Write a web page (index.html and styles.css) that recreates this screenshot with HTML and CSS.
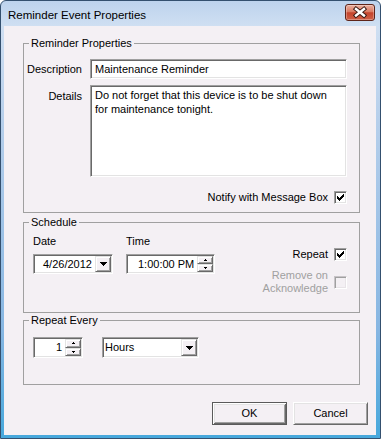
FILE: index.html
```html
<!DOCTYPE html>
<html>
<head>
<meta charset="utf-8">
<title>Reminder Event Properties</title>
<link rel="stylesheet" href="styles.css">
</head>
<body>
<div class="window">
  <div class="titlebar">
    <span class="title">Reminder Event Properties</span>
    <span class="close-btn">
      <svg width="28" height="15" viewBox="0 0 28 15">
        <path d="M10 4 L18 10.5 M18 4 L10 10.5" stroke="#3b1a14" stroke-width="4.4" stroke-linecap="square" fill="none"/>
        <path d="M10 4 L18 10.5 M18 4 L10 10.5" stroke="#ffffff" stroke-width="2.4" stroke-linecap="square" fill="none"/>
      </svg>
    </span>
  </div>
  <div class="client">
    <fieldset class="group group-props">
      <legend>Reminder Properties</legend>
      <div class="props-grid">
        <span class="field-label">Description</span>
        <div class="textbox">Maintenance Reminder</div>
        <span class="field-label field-label-top">Details</span>
        <div class="textbox textarea">Do not forget that this device is to be shut down<br>for maintenance tonight.</div>
      </div>
      <div class="check-row notify-row">
        <span class="check-text">Notify with Message Box</span>
        <span class="checkbox"><svg width="7" height="7" viewBox="0 0 7 7"><path d="M6 0h1v1h-1z M5 1h2v1h-2z M0 2h1v1H0z M4 2h3v1H4z M0 3h2v1H0z M3 3h3v1H3z M0 4h5v1H0z M1 5h3v1H1z M2 6h1v1H2z" fill="#000"/></svg></span>
      </div>
    </fieldset>

    <fieldset class="group group-schedule">
      <legend>Schedule</legend>
      <div class="schedule-body">
        <div class="picker-col date-col">
          <span class="col-label">Date</span>
          <div class="picker date-picker">
            <span class="picker-text">4/26/2012</span>
            <span class="drop-btn"><svg width="7" height="4" viewBox="0 0 7 4"><path d="M0 0h7v1H0z M1 1h5v1H1z M2 2h3v1H2z M3 3h1v1H3z" fill="#000"/></svg></span>
          </div>
        </div>
        <div class="picker-col time-col">
          <span class="col-label">Time</span>
          <div class="picker time-picker">
            <span class="picker-text">1:00:00 PM</span>
            <span class="spin">
              <span class="spin-half"><svg width="3" height="2" viewBox="0 0 3 2"><path d="M1 0h1v1H1z M0 1h3v1H0z" fill="#000"/></svg></span>
              <span class="spin-half"><svg width="3" height="2" viewBox="0 0 3 2"><path d="M0 0h3v1H0z M1 1h1v1H1z" fill="#000"/></svg></span>
            </span>
          </div>
        </div>
        <div class="schedule-checks">
          <div class="check-row">
            <span class="check-text">Repeat</span>
            <span class="checkbox"><svg width="7" height="7" viewBox="0 0 7 7"><path d="M6 0h1v1h-1z M5 1h2v1h-2z M0 2h1v1H0z M4 2h3v1H4z M0 3h2v1H0z M3 3h3v1H3z M0 4h5v1H0z M1 5h3v1H1z M2 6h1v1H2z" fill="#000"/></svg></span>
          </div>
          <div class="check-row disabled-row">
            <span class="check-text">Remove on<br>Acknowledge</span>
            <span class="checkbox checkbox-disabled"></span>
          </div>
        </div>
      </div>
    </fieldset>

    <fieldset class="group group-repeat">
      <legend>Repeat Every</legend>
      <div class="repeat-body">
        <div class="picker num-spinner">
          <span class="picker-text">1</span>
          <span class="spin">
            <span class="spin-half"><svg width="3" height="2" viewBox="0 0 3 2"><path d="M1 0h1v1H1z M0 1h3v1H0z" fill="#000"/></svg></span>
            <span class="spin-half"><svg width="3" height="2" viewBox="0 0 3 2"><path d="M0 0h3v1H0z M1 1h1v1H1z" fill="#000"/></svg></span>
          </span>
        </div>
        <div class="picker combo">
          <span class="picker-text">Hours</span>
          <span class="drop-btn"><svg width="7" height="4" viewBox="0 0 7 4"><path d="M0 0h7v1H0z M1 1h5v1H1z M2 2h3v1H2z M3 3h1v1H3z" fill="#000"/></svg></span>
        </div>
      </div>
    </fieldset>

    <div class="button-row">
      <button class="btn btn-default">OK</button>
      <button class="btn">Cancel</button>
    </div>
  </div>
</div>
</body>
</html>
```

FILE: styles.css
```css
* { box-sizing: border-box; }

body {
  margin: 0;
  font-family: "Liberation Sans", Arial, sans-serif;
  font-size: 11px;
  line-height: 13px;
  color: #000;
  background: #ffffff;
}

.window {
  width: 381px;
  height: 439px;
  border: 1px solid #34506f;
  border-radius: 6px 6px 0 0;
  background: linear-gradient(to bottom, #bdd3ed 0px, #cfdff2 25px, #b6cfeb 120px, #86b6e2 330px, #46a8dc 100%);
  display: flex;
  flex-direction: column;
  overflow: hidden;
}

.titlebar {
  height: 25px;
  flex-shrink: 0;
  display: flex;
  align-items: flex-start;
}

.title {
  font-size: 11.5px;
  line-height: 15px;
  padding: 7px 0 0 7px;
  color: #000;
}

.close-btn {
  margin: 3px 5px 0 auto;
  width: 30px;
  height: 17px;
  border: 1px solid #5e2419;
  border-radius: 3px;
  background: linear-gradient(to bottom, #eab0a0 0%, #da7a62 45%, #c4432b 52%, #cf6047 100%);
  box-shadow: inset 0 0 0 1px rgba(255, 255, 255, 0.3);
  display: flex;
}

.client {
  flex: 1;
  margin: 0 4px 3px 3px;
  background: #f4f0f4;
  padding: 11px 0 0 19px;
  display: flex;
  flex-direction: column;
  align-items: flex-start;
}

.group {
  margin: 0;
  padding: 0;
  border: 1px solid #a0a0a0;
  width: 337px;
  min-width: 0;
}

.group legend {
  margin-left: 5px;
  padding: 0 2px;
  line-height: 13px;
}

.group-props { height: 176px; }
.group-schedule { height: 97px; margin-top: 3px; }
.group-repeat { height: 71px; margin-top: 1px; }

.props-grid {
  display: grid;
  grid-template-columns: 58px 257px;
  column-gap: 8px;
  row-gap: 6px;
  padding-top: 9px;
}

.field-label {
  text-align: right;
  align-self: center;
}

.field-label-top {
  align-self: start;
  margin-top: 5px;
}

.textbox {
  background: #fff;
  border: 1px solid;
  border-color: #a0a0a0 #ffffff #ffffff #a0a0a0;
  box-shadow: inset 1px 1px 0 #696969, inset -1px -1px 0 #e3e3e3;
  height: 20px;
  padding: 0 4px;
  display: flex;
  align-items: center;
  white-space: nowrap;
}

.textarea {
  display: block;
  height: 92px;
  padding: 2px 4px;
  line-height: 14px;
}

.check-row {
  display: flex;
  justify-content: flex-end;
  align-items: center;
}

.notify-row {
  margin-top: 14px;
  padding-right: 12px;
}

.check-text {
  text-align: right;
}

.checkbox {
  width: 13px;
  height: 13px;
  flex-shrink: 0;
  margin-left: 6px;
  background: #fff;
  border: 1px solid;
  border-color: #a0a0a0 #ffffff #ffffff #a0a0a0;
  box-shadow: inset 1px 1px 0 #696969, inset -1px -1px 0 #e3e3e3;
  display: flex;
  align-items: center;
  justify-content: center;
}

.checkbox svg { display: block; }

.checkbox-disabled {
  background: #f4f0f4;
  border-color: #c8c4c8 #ffffff #ffffff #c8c4c8;
  box-shadow: inset 1px 1px 0 #a0a0a0, inset -1px -1px 0 #e8e4e8;
}

.disabled-row .check-text {
  color: #a0a0a0;
}

.schedule-body {
  display: flex;
  padding: 6px 12px 0 9px;
}

.picker-col {
  display: flex;
  flex-direction: column;
}

.col-label {
  line-height: 13px;
  margin-bottom: 6px;
}

.date-col { width: 80px; }
.time-col { width: 89px; margin-left: 13px; }

.picker {
  background: #fff;
  border: 1px solid;
  border-color: #a0a0a0 #ffffff #ffffff #a0a0a0;
  box-shadow: inset 1px 1px 0 #696969, inset -1px -1px 0 #e3e3e3;
  height: 20px;
  padding: 1px;
  display: flex;
  align-items: center;
  white-space: nowrap;
}

.picker-text {
  flex: 1;
}

.date-picker .picker-text { padding-left: 8px; }
.time-picker .picker-text { padding-left: 10px; }

.drop-btn {
  width: 16px;
  height: 16px;
  flex-shrink: 0;
  background: #f4f0f4;
  border: 1px solid;
  border-color: #e3e3e3 #696969 #696969 #e3e3e3;
  box-shadow: inset 1px 1px 0 #ffffff, inset -1px -1px 0 #a0a0a0;
  display: flex;
  align-items: center;
  justify-content: center;
}

.drop-btn svg, .spin-half svg { display: block; }

.spin {
  width: 16px;
  height: 16px;
  flex-shrink: 0;
  display: flex;
  flex-direction: column;
}

.spin-half {
  height: 8px;
  background: #f4f0f4;
  border: 1px solid;
  border-color: #e3e3e3 #696969 #696969 #e3e3e3;
  box-shadow: inset 1px 1px 0 #ffffff, inset -1px -1px 0 #a0a0a0;
  display: flex;
  align-items: center;
  justify-content: center;
}

.schedule-checks {
  margin-left: auto;
  padding-top: 13px;
  display: flex;
  flex-direction: column;
  align-items: flex-end;
}

.disabled-row {
  margin-top: 8px;
}

.repeat-body {
  display: flex;
  padding: 10px 0 0 9px;
}

.num-spinner {
  width: 50px;
  height: 21px;
}

.num-spinner .picker-text {
  text-align: right;
  padding-right: 3px;
}

.num-spinner .spin {
  height: 17px;
}

.num-spinner .spin-half {
  height: 8.5px;
}

.combo {
  width: 97px;
  height: 21px;
  margin-left: 19px;
}

.combo .picker-text { padding-left: 1px; }

.combo .drop-btn {
  height: 17px;
}

.button-row {
  align-self: stretch;
  display: flex;
  justify-content: flex-end;
  gap: 6px;
  margin: 17px 8px 0 0;
}

.btn {
  width: 75px;
  height: 23px;
  padding: 0;
  font: inherit;
  color: #000;
  background: #f4f0f4;
  border: 1px solid;
  border-color: #ffffff #696969 #696969 #ffffff;
  box-shadow: inset 1px 1px 0 #e3e3e3, inset -1px -1px 0 #a0a0a0;
}

.btn-default {
  border: 1px solid #5a5a5a;
  box-shadow: inset 1px 1px 0 #ffffff, inset -1px -1px 0 #696969, inset 2px 2px 0 #e3e3e3, inset -2px -2px 0 #a0a0a0;
}
```
